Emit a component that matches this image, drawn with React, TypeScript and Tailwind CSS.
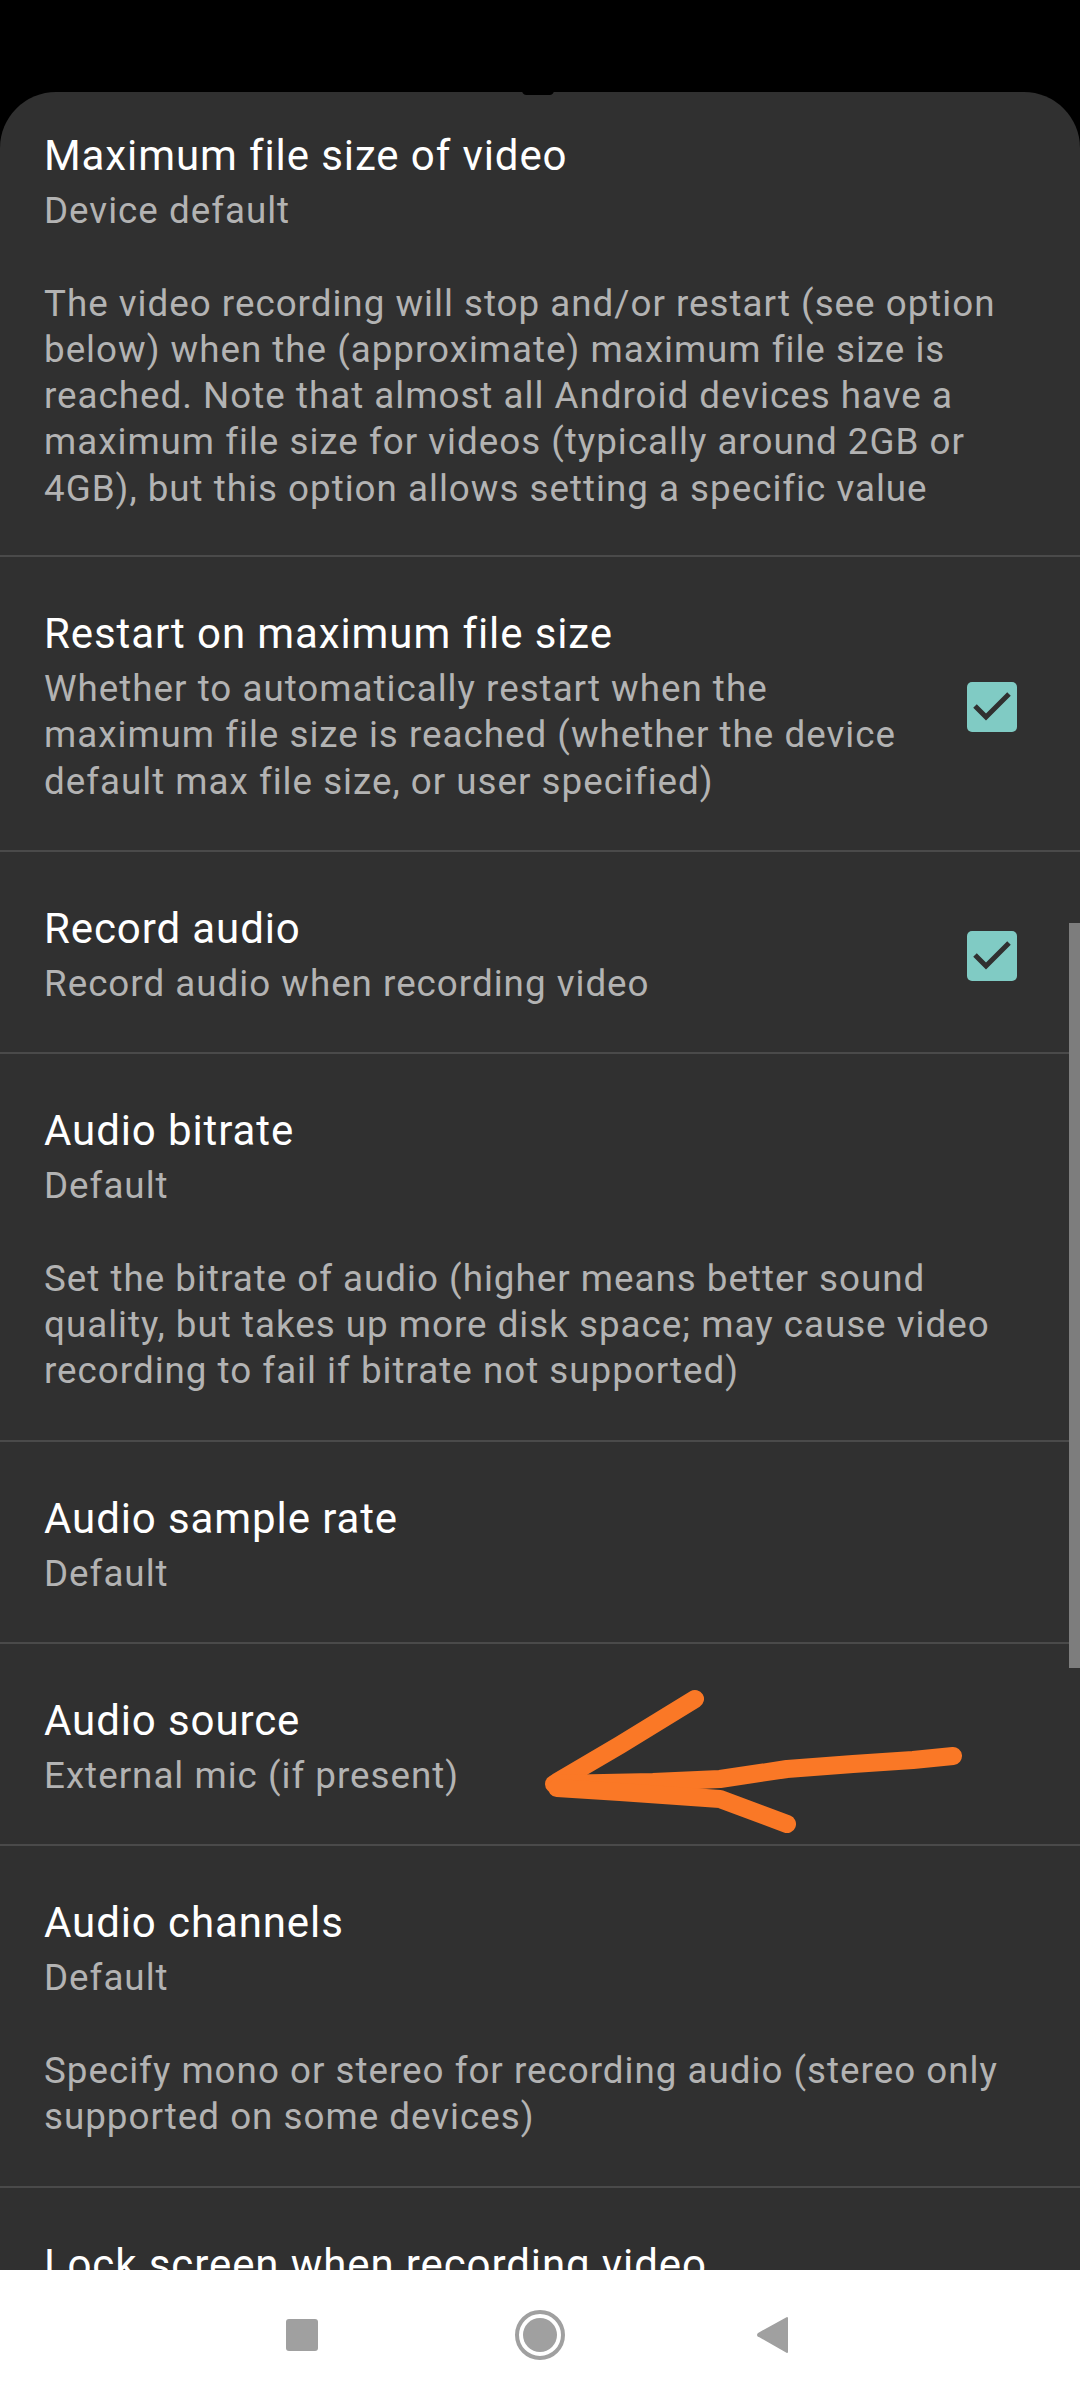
import { Fragment } from "react";

type Pref = {
  title: string;
  lines: string[];
  checked?: boolean;
  arrow?: boolean;
  first?: boolean;
};

const prefs: Pref[] = [
  {
    title: "Maximum file size of video",
    first: true,
    lines: [
      "Device default",
      "",
      "The video recording will stop and/or restart (see option",
      "below) when the (approximate) maximum file size is",
      "reached. Note that almost all Android devices have a",
      "maximum file size for videos (typically around 2GB or",
      "4GB), but this option allows setting a specific value",
    ],
  },
  {
    title: "Restart on maximum file size",
    checked: true,
    lines: [
      "Whether to automatically restart when the",
      "maximum file size is reached (whether the device",
      "default max file size, or user specified)",
    ],
  },
  {
    title: "Record audio",
    checked: true,
    lines: ["Record audio when recording video"],
  },
  {
    title: "Audio bitrate",
    lines: [
      "Default",
      "",
      "Set the bitrate of audio (higher means better sound",
      "quality, but takes up more disk space; may cause video",
      "recording to fail if bitrate not supported)",
    ],
  },
  {
    title: "Audio sample rate",
    lines: ["Default"],
  },
  {
    title: "Audio source",
    arrow: true,
    lines: ["External mic (if present)"],
  },
  {
    title: "Audio channels",
    lines: [
      "Default",
      "",
      "Specify mono or stereo for recording audio (stereo only",
      "supported on some devices)",
    ],
  },
  {
    title: "Lock screen when recording video",
    lines: ["Whether to lock the screen when recording video"],
  },
];

const CheckBox = () => (
  <div className="size-[50px] rounded-[5px] bg-[#80cbc4] flex items-center justify-center shrink-0">
    <svg width="50" height="50" viewBox="0 0 50 50">
      <path d="M8 24 L19 35 L42 12" fill="none" stroke="#303030" strokeWidth="5" />
    </svg>
  </div>
);

const Arrow = () => (
  <svg
    className="absolute left-0 top-0 pointer-events-none"
    width="1080"
    height="200"
    viewBox="0 0 1080 200"
  >
    <g fill="none" stroke="#fa7826" strokeWidth="18" strokeLinecap="round" strokeLinejoin="round">
      <polyline points="695,55 620,101 557,138" />
      <polyline points="554,140 653,138 720,135 787,125 853,120 913,116 953,112" />
      <polyline points="557,144 620,148 720,155 787,180" />
    </g>
  </svg>
);

const PrefRow = ({ p }: { p: Pref }) => (
  <div
    className={`relative flex items-center pl-[44px] pr-[63px] ${
      p.first ? "pt-[39px] pb-[43px]" : "pt-[52px] pb-[45px]"
    }`}
  >
    <div className="flex-1 min-w-0">
      <div className="text-[42px] leading-[49px] tracking-[0.9px] text-white whitespace-nowrap mb-[8px]">
        {p.title}
      </div>
      <div className="text-[36.75px] leading-[46.3px] tracking-[1px] text-[#b3b3b3]">
        {p.lines.map((l, i) => (
          <div key={i} className="whitespace-nowrap h-[46.3px]">
            {l}
          </div>
        ))}
      </div>
    </div>
    {p.checked && <CheckBox />}
    {p.arrow && <Arrow />}
  </div>
);

export default function App() {
  return (
    <div className="w-[1080px] h-[2400px] bg-black flex flex-col overflow-hidden font-['Roboto',sans-serif] relative">
      <div className="h-[92px] shrink-0 bg-black" />
      {/* camera cutout dip */}
      <div className="absolute left-[522px] top-[86px] w-[32px] h-[9px] rounded-full bg-black z-10" />
      <div className="h-[2178px] shrink-0 bg-[#303030] rounded-t-[56px] overflow-hidden relative">
        {prefs.map((p, i) => (
          <Fragment key={i}>
            <PrefRow p={p} />
            <div className="h-[2px] bg-[#4a4a4a]" />
          </Fragment>
        ))}
        <div className="absolute right-0 top-[831px] w-[11px] h-[745px] bg-[#7d7d7d]" />
      </div>
      <div className="h-[130px] shrink-0 bg-white flex items-center pl-[286px]">
        <div className="size-[32px] rounded-[3px] bg-[#a0a0a0]" />
        <div className="ml-[197px] size-[50px] rounded-full border-[4px] border-[#a0a0a0] flex items-center justify-center">
          <div className="size-[34px] rounded-full bg-[#a0a0a0]" />
        </div>
        <svg className="ml-[191px]" width="34" height="38" viewBox="0 0 34 38">
          <path
            d="M31 2 L31 36 L3 20 Q1 19 3 17.5 Z"
            fill="#a0a0a0"
            stroke="#a0a0a0"
            strokeWidth="2"
            strokeLinejoin="round"
          />
        </svg>
      </div>
    </div>
  );
}
